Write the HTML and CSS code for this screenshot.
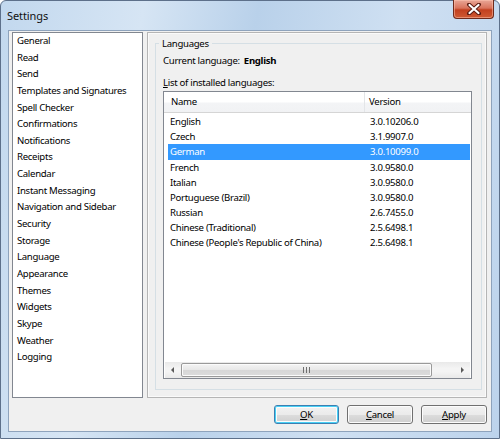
FILE: index.html
```html
<!DOCTYPE html>
<html>
<head>
<meta charset="utf-8">
<link rel="stylesheet" href="styles.css">
</head>
<body>
<div class="window">
  <div class="titlebar">
    <span class="title">Settings</span>
    <div class="close">
      <svg width="16" height="12" viewBox="0 0 16 12"><path d="M3 1.5 L13 10.5 M13 1.5 L3 10.5" stroke="#5a1a10" stroke-width="4" stroke-linecap="round"/><path d="M3.5 2 L12.5 10 M12.5 2 L3.5 10" stroke="#ffffff" stroke-width="2.2" stroke-linecap="round"/></svg>
    </div>
  </div>
  <div class="client">
    <div class="main">
      <ul class="nav">
        <li>General</li>
        <li>Read</li>
        <li>Send</li>
        <li>Templates and Signatures</li>
        <li>Spell Checker</li>
        <li>Confirmations</li>
        <li>Notifications</li>
        <li>Receipts</li>
        <li>Calendar</li>
        <li>Instant Messaging</li>
        <li>Navigation and Sidebar</li>
        <li>Security</li>
        <li>Storage</li>
        <li>Language</li>
        <li>Appearance</li>
        <li>Themes</li>
        <li>Widgets</li>
        <li>Skype</li>
        <li>Weather</li>
        <li>Logging</li>
      </ul>
      <div class="panel">
        <fieldset class="group">
          <legend>Languages</legend>
          <div class="current">Current language:<b>English</b></div>
          <div class="listlabel"><u>L</u>ist of installed languages:</div>
          <div class="listview">
            <div class="header">
              <div class="hcol name">Name</div>
              <div class="hcol ver">Version</div>
            </div>
            <div class="rows">
              <div class="row"><span class="c1">English</span><span class="c2">3.0.10206.0</span></div>
              <div class="row"><span class="c1">Czech</span><span class="c2">3.1.9907.0</span></div>
              <div class="row sel"><span class="c1">German</span><span class="c2">3.0.10099.0</span></div>
              <div class="row"><span class="c1">French</span><span class="c2">3.0.9580.0</span></div>
              <div class="row"><span class="c1">Italian</span><span class="c2">3.0.9580.0</span></div>
              <div class="row"><span class="c1">Portuguese (Brazil)</span><span class="c2">3.0.9580.0</span></div>
              <div class="row"><span class="c1">Russian</span><span class="c2">2.6.7455.0</span></div>
              <div class="row"><span class="c1">Chinese (Traditional)</span><span class="c2">2.5.6498.1</span></div>
              <div class="row"><span class="c1">Chinese (People's Republic of China)</span><span class="c2">2.5.6498.1</span></div>
            </div>
            <div class="hscroll">
              <div class="arrow left"></div>
              <div class="track">
                <div class="thumb"><span class="grip"></span><span class="grip"></span><span class="grip"></span></div>
              </div>
              <div class="arrow right"></div>
            </div>
          </div>
        </fieldset>
      </div>
    </div>
    <div class="buttons">
      <button class="btn default"><u>O</u>K</button>
      <button class="btn"><u>C</u>ancel</button>
      <button class="btn"><u>A</u>pply</button>
    </div>
  </div>
</div>
</body>
</html>
```

FILE: styles.css
```css
* { box-sizing: border-box; }
html, body { margin: 0; padding: 0; background: #ffffff; }
body {
  font-family: "Noto Sans", "Open Sans", sans-serif;
  font-size: 9.6px;
  letter-spacing: -0.3px;
  color: #000;
}
.window {
  width: 500px;
  height: 439px;
  border: 1px solid #5d708a;
  border-radius: 6px 6px 0 0;
  background: linear-gradient(100deg, #c2d8ee 0%, #d6e5f4 25%, #b9d1ea 45%, #cfe0f2 70%, #bcd3ec 100%);
  display: flex;
  flex-direction: column;
}
.titlebar {
  height: 29px;
  position: relative;
  display: flex;
  align-items: center;
  padding-left: 6px;
}
.title {
  font-size: 11px;
  letter-spacing: -0.1px;
  color: #111;
  margin-top: -1px;
}
.close {
  position: absolute;
  right: 5px;
  top: -1px;
  width: 41px;
  height: 19px;
  border: 1px solid #6e2a1c;
  border-top: none;
  border-radius: 0 0 4px 4px;
  background: linear-gradient(#e9a797 0%, #d9735c 45%, #c2401f 55%, #cf5a33 100%);
  display: flex;
  align-items: center;
  justify-content: center;
  box-shadow: inset 0 0 0 1px rgba(255,200,180,0.5);
}
.client {
  margin: 0 7px;
  height: 402px;
  background: #f0f0f0;
  border: 1px solid #8ea3bc;
  padding: 1px 4px 0 3px;
  display: flex;
  flex-direction: column;
}
.main {
  display: flex;
  gap: 4px;
  height: 366px;
}
.nav {
  list-style: none;
  margin: 0;
  width: 131px;
  height: 366px;
  background: #fff;
  border: 1px solid #828790;
  padding: 0 0 0 4px;
}
.nav li {
  height: 16.65px;
  line-height: 16px;
  white-space: nowrap;
}
.panel {
  width: 340px;
  height: 366px;
  border: 1px solid #b5b5b5;
  box-shadow: inset 0 0 0 1px #fafafa;
  background: #f0f0f0;
  padding: 4px 4px 7px 7px;
  display: flex;
}
.group {
  flex: 1;
  margin: 0;
  border: 1px solid #d5dfe5;
  padding: 0 9px 9px 7px;
  min-width: 0;
  display: flex;
  flex-direction: column;
}
.group legend {
  padding: 0 3px;
  margin-left: -4px;
  line-height: 13px;
  height: 13px;
}
.current {
  margin-top: 4px;
  line-height: 14px;
}
.current b {
  margin-left: 4px;
  font-weight: bold;
}
.listlabel {
  margin-top: 8px;
  line-height: 14px;
}
.listlabel u { text-decoration-thickness: 1px; }
.listview {
  margin-top: 1px;
  height: 288px;
  border: 1px solid #828790;
  background: #fff;
  display: flex;
  flex-direction: column;
}
.header {
  height: 21px;
  display: flex;
  background: linear-gradient(#ffffff 0%, #ffffff 50%, #f3f4f6 55%, #f1f2f4 100%);
  border-bottom: 1px solid #d5d5d5;
}
.hcol {
  line-height: 19px;
  padding-left: 7px;
}
.hcol.name {
  width: 201px;
  border-right: 1px solid #e3e5e8;
}
.hcol.ver {
  flex: 1;
  padding-left: 4px;
}
.rows {
  flex: 1;
  padding-top: 1px;
}
.row {
  height: 15px;
  line-height: 15px;
  margin: 0 1px 0 4px;
  display: flex;
  white-space: nowrap;
}
.row .c1 { width: 200px; padding-left: 2px; }
.row .c2 { padding-left: 2px; }
.row.sel { background: #3399ff; color: #fff; height: 16px; line-height: 16px; }
.hscroll {
  height: 16px;
  margin: 0 1px 0 1px;
  display: flex;
  align-items: center;
  background: linear-gradient(#e9e9e9, #f4f4f4 40%, #f4f4f4 60%, #e9e9e9);
}
.arrow {
  width: 16px;
  height: 16px;
  position: relative;
}
.arrow::after {
  content: "";
  position: absolute;
  top: 5px;
  border-top: 3px solid transparent;
  border-bottom: 3px solid transparent;
}
.arrow.left::after { left: 6px; border-right: 3px solid #5a5a5a; }
.arrow.right::after { left: 7px; border-left: 3px solid #5a5a5a; }
.track {
  flex: 1;
  height: 16px;
  padding: 1px 22px 1px 0;
}
.thumb {
  height: 14px;
  border: 1px solid #9a9a9a;
  border-radius: 2px;
  background: linear-gradient(#f4f4f4, #e7e7e7 50%, #d7d7d7 51%, #dcdcdc);
  box-shadow: inset 0 0 0 1px #fbfbfb;
  display: flex;
  justify-content: center;
  align-items: center;
  gap: 2px;
}
.grip {
  width: 1px;
  height: 6px;
  background: #6f6f6f;
}
.buttons {
  display: flex;
  justify-content: flex-end;
  gap: 8px;
  margin-top: 7px;
}
.btn {
  font-family: inherit;
  font-size: 9.6px;
  letter-spacing: -0.3px;
  width: 66px;
  height: 19px;
  padding: 0;
  border: 1px solid #707070;
  border-radius: 3px;
  background: linear-gradient(#f2f2f2 0%, #ebebeb 50%, #dddddd 51%, #cfcfcf 100%);
  box-shadow: inset 0 0 0 1px #fcfcfc;
  color: #000;
}
.btn.default {
  width: 65px;
  border-color: #3c7fb1;
  box-shadow: inset 0 0 0 1px #48d0f5, inset 0 0 0 2px #fcfcfc;
}
.btn u { text-decoration-thickness: 1px; }
```
